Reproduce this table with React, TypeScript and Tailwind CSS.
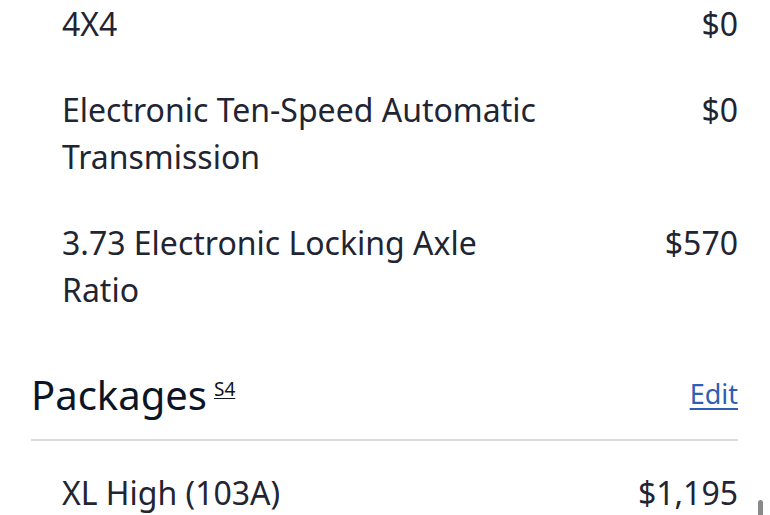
const items = [
  { label: "4X4", price: "$0" },
  { label: "Electronic Ten-Speed Automatic Transmission", price: "$0" },
  { label: "3.73 Electronic Locking Axle Ratio", price: "$570" },
];

export default function App() {
  return (
    <div
      className="relative h-[515px] overflow-hidden bg-white pl-[31px] pr-[32px] text-[#1f2533]"
      style={{ fontFamily: '"Noto Sans", sans-serif' }}
    >
      {/* Options list */}
      <div className="flex flex-col gap-[39px] pl-[31px]">
        {items.map((item) => (
          <div key={item.label} className="flex items-start justify-between text-[32px] leading-[47px]">
            <span className="w-[480px]">{item.label}</span>
            <span>{item.price}</span>
          </div>
        ))}
      </div>

      {/* Packages header */}
      <div className="mt-[58px] flex items-end justify-between border-b-2 border-[#dadada] pb-[20px]">
        <h2 className="text-[40px] leading-[48px] text-[#0c1526]">
          Packages
          <sup className="relative top-0 ml-[7px] align-[14px] text-[19px] leading-none underline underline-offset-[2px]">
            S4
          </sup>
        </h2>
        <a href="#" className="pb-[7px] text-[27px] leading-[36px] text-[#2e5fb7] underline underline-offset-[4px]">
          Edit
        </a>
      </div>

      <div className="mt-[28px] flex items-start justify-between pl-[31px] text-[32px] leading-[47px]">
        <span>XL High (103A)</span>
        <span>$1,195</span>
      </div>

      {/* scroll indicator */}
      <div className="absolute right-[7px] top-[500px] h-[20px] w-[5px] rounded-full bg-[#8a8a8a]" />
    </div>
  );
}
